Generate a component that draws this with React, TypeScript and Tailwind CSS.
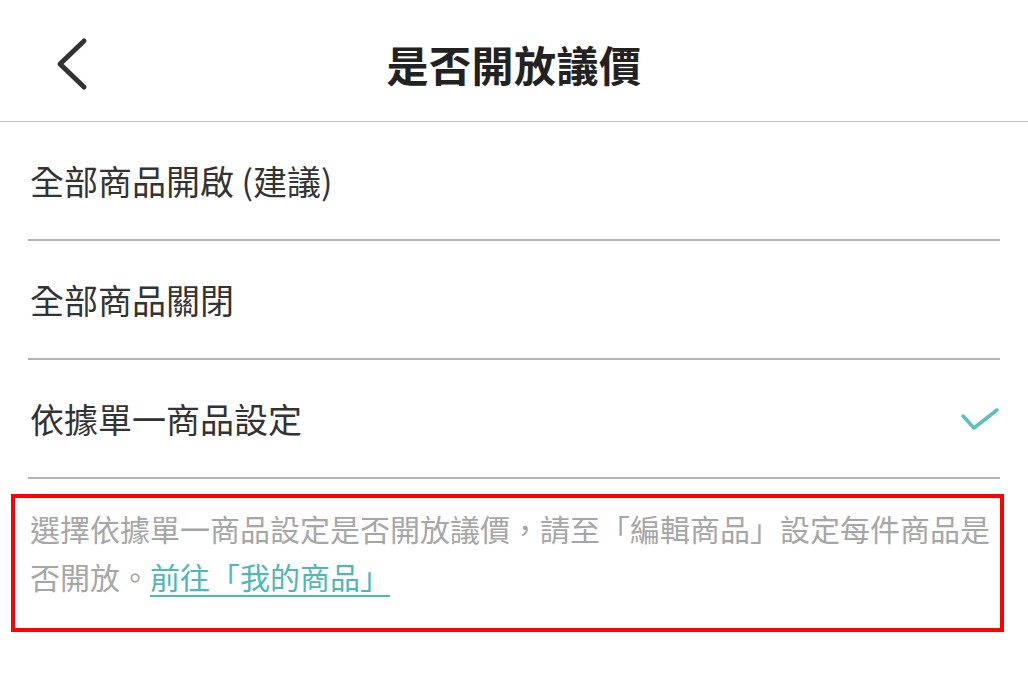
const options = [
  { label: "全部商品開啟 (建議)", checked: false },
  { label: "全部商品關閉", checked: false },
  { label: "依據單一商品設定", checked: true },
]

export default function App() {
  return (
    <div
      className="min-h-[686px] w-[1028px] bg-white text-[#333333]"
      style={{ fontFamily: '"Noto Sans CJK TC", "Noto Sans", sans-serif' }}
    >
      <header className="relative flex h-[122px] items-center justify-center border-b border-[#c4c4c4]">
        <button className="absolute left-[54px] top-[37px]">
          <svg width="36" height="54" viewBox="0 0 36 54" fill="none">
            <path d="M30 4 L6 27 L30 50" stroke="#333" strokeWidth="5" strokeLinecap="round" strokeLinejoin="round" />
          </svg>
        </button>
        <h1 className="mt-[6px] text-[42px] font-bold leading-none tracking-[0.5px] text-[#222]">是否開放議價</h1>
      </header>

      <ul className="mx-[28px]">
        {options.map((o) => (
          <li key={o.label} className="flex h-[119px] items-center justify-between border-b-2 border-[#b5b5b5] pl-[2px]">
            <span className="text-[34px] leading-none">{o.label}</span>
            {o.checked && (
              <svg width="40" height="26" viewBox="0 0 40 26" fill="none">
                <path d="M3 10 L14 22 L37 4" stroke="#5cc0bb" strokeWidth="3.5" strokeLinecap="round" strokeLinejoin="round" />
              </svg>
            )}
          </li>
        ))}
      </ul>

      <div className="ml-[11px] mt-[15px] h-[138px] w-[993px] border-4 border-[#ff0000] pl-[15px] pr-[4px] pt-[6px]">
        <p className="text-[30px] leading-[48px] text-[#a6a6a6]">
          選擇依據單一商品設定是否開放議價，請至「編輯商品」設定每件商品是否開放。
          <a href="#" className="text-[#4db8b4] underline decoration-2 underline-offset-[6px]">
            前往「我的商品」
          </a>
        </p>
      </div>
    </div>
  )
}
